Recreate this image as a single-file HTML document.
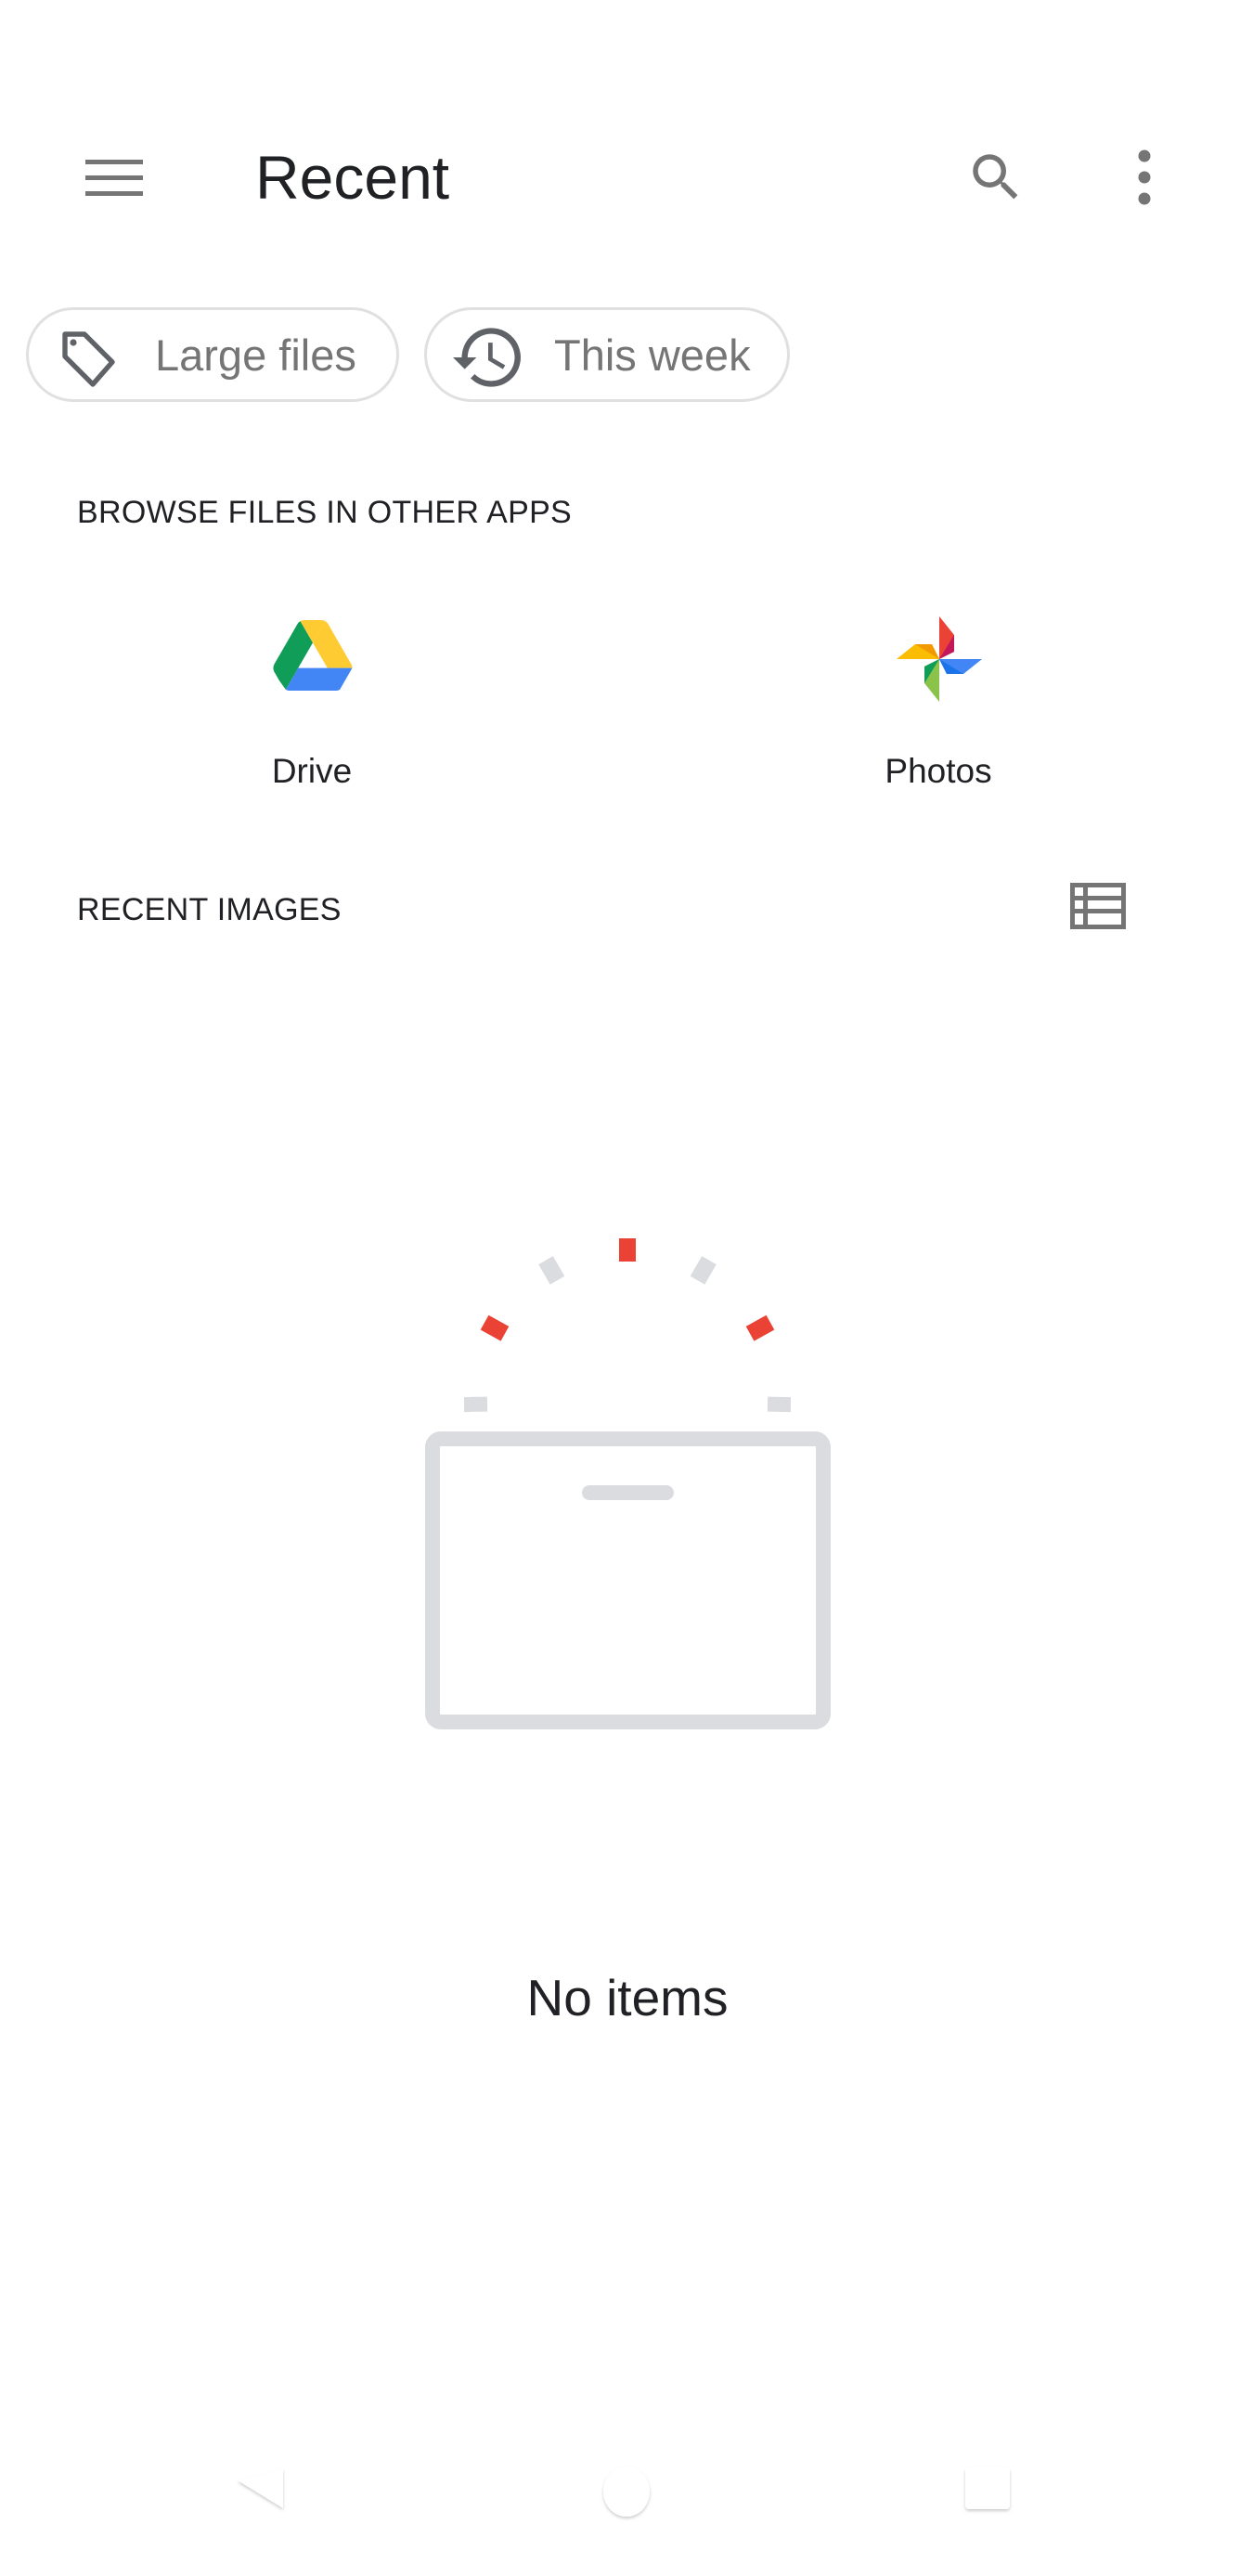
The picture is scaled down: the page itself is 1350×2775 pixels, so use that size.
<!DOCTYPE html>
<html><head><meta charset="utf-8"><style>
html,body{margin:0;padding:0;background:#fff;width:1350px;height:2775px;overflow:hidden;font-family:"Liberation Sans",sans-serif;position:relative}
.a{position:absolute}
.chip{position:absolute;top:331px;height:102px;border:3px solid #e0e0e0;border-radius:54px;box-sizing:border-box}
.ct{position:absolute;top:22px;font-size:47px;color:#757575;line-height:54px}
.sec{font-size:34px;color:#202124;letter-spacing:0.3px}
.lbl{font-size:37px;color:#202124;text-align:center;width:300px}
</style></head><body>
<svg class="a" style="left:92px;top:170px" width="64" height="44" viewBox="0 0 64 44"><g fill="#757575"><rect x="0" y="2" width="62" height="5"/><rect x="0" y="19" width="62" height="5"/><rect x="0" y="36" width="62" height="5"/></g></svg>
<div class="a" style="left:275px;top:152px;font-size:66px;color:#202124;line-height:78px">Recent</div>
<svg class="a" style="left:1040px;top:158px" width="66" height="66" viewBox="0 0 24 24"><path fill="#757575" d="M15.5 14h-.79l-.28-.27A6.47 6.47 0 0016 9.5 6.5 6.5 0 109.5 16c1.61 0 3.090-.59 4.23-1.57l.27.28v.79l5 4.99L20.49 19l-4.99-5zm-6 0C7.01 14 5 11.990 5 9.5S7.010 5 9.5 5 14 7.010 14 9.5 11.990 14 9.5 14z"/></svg>
<svg class="a" style="left:1220px;top:160px" width="26" height="62" viewBox="0 0 26 62"><g fill="#757575"><circle cx="13" cy="8" r="6.5"/><circle cx="13" cy="31" r="6.5"/><circle cx="13" cy="54" r="6.5"/></g></svg>
<div class="chip" style="left:28px;width:402px">
<svg class="a" style="left:30px;top:17px" width="72" height="72" viewBox="0 0 24 24"><path fill="none" stroke="#5f6368" stroke-width="1.8" stroke-linejoin="round" d="M3 3h7l10 10-7 8L3 11z"/><circle cx="6" cy="6" r="1.2" fill="#5f6368"/></svg>
<div class="ct" style="left:136px">Large files</div></div>
<div class="chip" style="left:457px;width:394px">
<svg class="a" style="left:28px;top:16px" width="76" height="70" viewBox="0 0 24 22"><path fill="#5f6368" d="M13 1a10 10 0 00-10 10H0l4 4 4-4H5a8 8 0 118 8 7.9 7.9 0 01-5.6-2.3L6 18.1A10 10 0 1013 1zm-1 5v6l5 3 .8-1.3-4.3-2.5V6z"/></svg>
<div class="ct" style="left:137px">This week</div></div>
<div class="a sec" style="left:83px;top:533px">BROWSE FILES IN OTHER APPS</div>
<svg class="a" style="left:294px;top:668px" width="86" height="76" viewBox="0 0 87.3 78"><path d="M43.65 25L29.9 1.2c-1.35.8-2.5 1.9-3.3 3.3L1.2 48.5A9 9 0 000 53c0 1.550.4 3.1 1.2 4.5l5.4 9.35 7.15 9.95L27.5 53z" fill="#0f9d58"/><path d="M73.4 26.5L60.7 4.5c-.8-1.4-1.95-2.5-3.3-3.3L43.65 25 59.8 53h27.45c0-1.55-.4-3.1-1.2-4.5z" fill="#ffcb32"/><path d="M43.650 25L57.4 1.2C56.05.4 54.5 0 52.9 0H34.4c-1.6 0-3.15.45-4.5 1.2z" fill="#ffcb32"/><path d="M59.8 53H27.5L13.75 76.8c1.35.8 2.9 1.2 4.5 1.2h50.8c1.6 0 3.15-.45 4.5-1.2L87.25 53z" fill="#4285f4"/></svg>
<div class="a lbl" style="left:186px;top:810px">Drive</div>
<svg class="a" style="left:964px;top:662px" width="96" height="96" viewBox="0 0 96 96">
<path d="M48 48 L48 2 L64 22 L64 40z" fill="#ea4335"/><path d="M48 48 L64 22 L64 40z" fill="#c2185b"/>
<path d="M48 48 L94 48 L74 64 L56 64z" fill="#4285f4"/><path d="M48 48 L74 64 L56 64z" fill="#1a73e8"/>
<path d="M48 48 L48 94 L32 74 L32 56z" fill="#8bc34a"/><path d="M48 48 L32 74 L32 56z" fill="#0f9d58"/>
<path d="M48 48 L2 48 L22 32 L40 32z" fill="#fbbc04"/><path d="M48 48 L22 32 L40 32z" fill="#f29900"/>
</svg>
<div class="a lbl" style="left:861px;top:810px">Photos</div>
<div class="a sec" style="left:83px;top:961px">RECENT IMAGES</div>
<svg class="a" style="left:1153px;top:951px" width="60" height="50" viewBox="0 0 60 50"><path fill="#757575" d="M0 0h60v50H0zM5 5v9h9V5zm14 0v9h36V5zM5 19v9h9v-9zm14 0v9h36v-9zM5 33v12h9V33zm14 0v12h36V33z" fill-rule="evenodd"/></svg>
<svg class="a" style="left:0;top:1300px" width="1350" height="600" viewBox="0 1300 1350 600">
<g transform="translate(676 1510)">
<rect x="-9" y="-176" width="18" height="25" fill="#ea4335"/>
<rect x="-9" y="-176" width="18" height="25" fill="#dadce0" transform="rotate(-30)"/>
<rect x="-9" y="-176" width="18" height="25" fill="#dadce0" transform="rotate(30)"/>
<rect x="-9" y="-176" width="18" height="25" fill="#ea4335" transform="rotate(-61)"/>
<rect x="-9" y="-176" width="18" height="25" fill="#ea4335" transform="rotate(61)"/>
<rect x="-8" y="-176" width="16" height="25" fill="#dadce0" transform="rotate(-91)"/>
<rect x="-8" y="-176" width="16" height="25" fill="#dadce0" transform="rotate(91)"/>
</g>
<rect x="466" y="1550" width="421" height="305" rx="9" fill="none" stroke="#dadce0" stroke-width="16"/>
<rect x="627" y="1600" width="99" height="16" rx="8" fill="#dadce0"/>
</svg>
<div class="a" style="left:426px;width:500px;text-align:center;top:2120px;font-size:55px;color:#202124">No items</div>
<svg class="a" style="left:250px;top:2650px" width="880" height="80" viewBox="0 0 880 80">
<defs><filter id="s"><feDropShadow dx="0" dy="2" stdDeviation="1.5" flood-color="#000" flood-opacity="0.2"/></filter></defs>
<g filter="url(#s)" fill="#fff"><path d="M6 22 L55 10 L55 52 z"/><ellipse cx="425" cy="34" rx="25" ry="27"/><rect x="790" y="8" width="48" height="45" rx="4"/></g>
</svg>
</body></html>
